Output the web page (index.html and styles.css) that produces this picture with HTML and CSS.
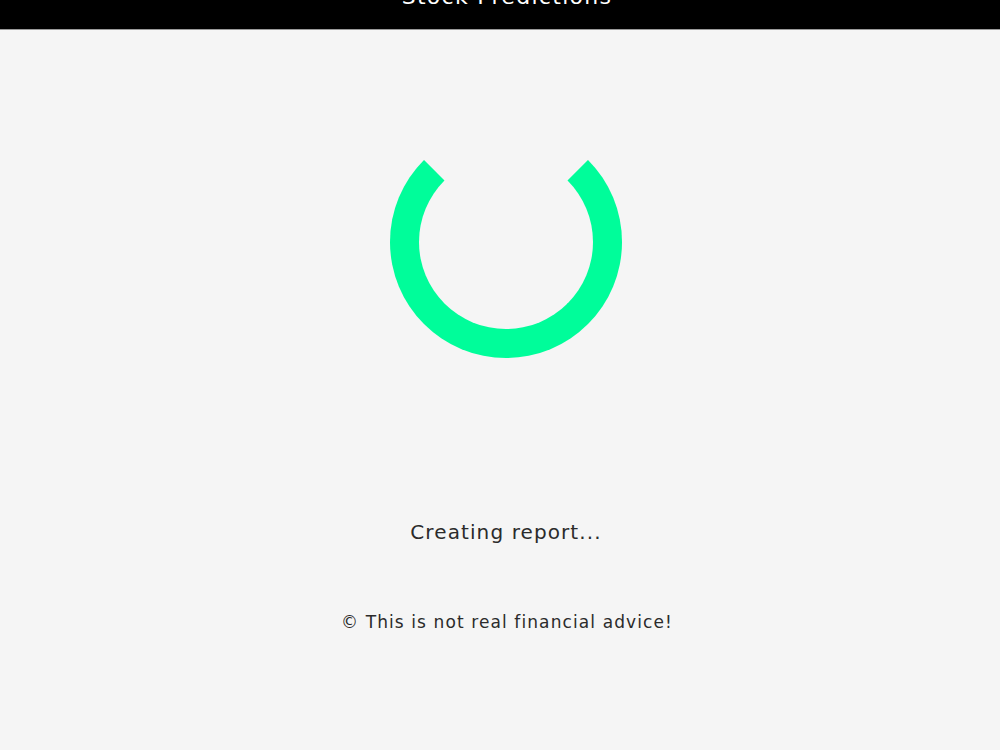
FILE: index.html
```html
<!DOCTYPE html>
<html lang="en">
  <head>
    <meta charset="UTF-8" />
    <meta name="viewport" content="width=device-width, initial-scale=1.0" />
    <title>Stock Predictions</title>
    <link rel="stylesheet" href="styles.css">
  </head>
  <body>
    <header class="site-header">
      <h1>Stock Predictions</h1>
    </header>

    <main class="loading-panel">
      <div class="spinner"></div>
      <p class="loading-text">Creating report...</p>
    </main>

    <footer class="site-footer">
      <p>&copy; This is not real financial advice!</p>
    </footer>
  </body>
</html>
```

FILE: styles.css
```css
body {
  font-family: "DejaVu Sans", "Open Sans", sans-serif;
  background: #f5f5f5;
  margin: 0;
  color: #2b2b2b;
}

.site-header {
  background: #000;
  height: 30px;
  overflow: hidden;
  border-bottom: 1px solid #9a9a9a;
  box-sizing: border-box;
  display: flex;
  justify-content: center;
  align-items: flex-end;
  padding-left: 14px;
}

.site-header h1 {
  margin: 0 0 21px;
  color: #fff;
  font-size: 22px;
  font-weight: normal;
  line-height: 1;
  letter-spacing: 1.3px;
}

.loading-panel {
  display: flex;
  flex-direction: column;
  align-items: center;
  padding-top: 96px;
  padding-left: 12px;
}

.spinner {
  width: 232px;
  height: 232px;
  box-sizing: border-box;
  border-radius: 50%;
  border: 29px solid #00fd9a;
  border-top-color: transparent;
}

.loading-text {
  margin: 160px 0 0;
  font-size: 20px;
  line-height: 28px;
  letter-spacing: 1.1px;
}

.site-footer {
  text-align: center;
  padding-left: 14px;
}

.site-footer p {
  margin: 64px 0 0;
  font-size: 17px;
  line-height: 24px;
  letter-spacing: 1.1px;
}
```
